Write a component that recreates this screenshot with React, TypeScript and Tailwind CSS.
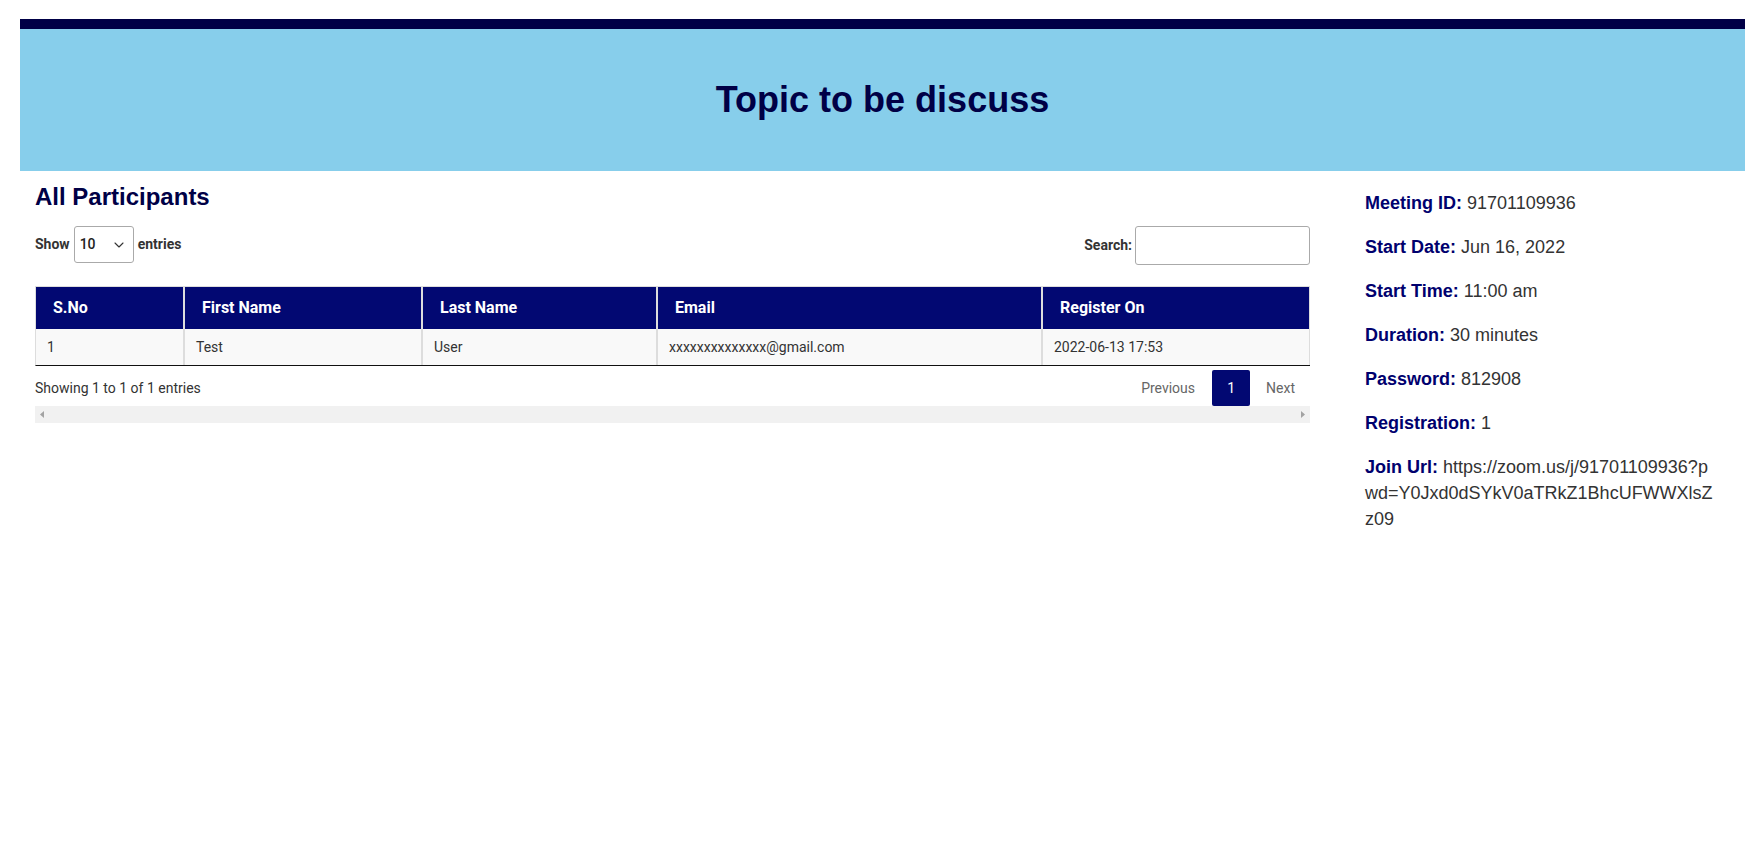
import { ChevronDown } from 'lucide-react';

const columns = [
  { label: 'S.No', w: 'w-[149px]' },
  { label: 'First Name', w: 'w-[238px]' },
  { label: 'Last Name', w: 'w-[235px]' },
  { label: 'Email', w: 'w-[385px]' },
  { label: 'Register On', w: 'flex-1' },
];

const row = ['1', 'Test', 'User', 'xxxxxxxxxxxxxx@gmail.com', '2022-06-13 17:53'];

const details = [
  { label: 'Meeting ID:', value: '91701109936' },
  { label: 'Start Date:', value: 'Jun 16, 2022' },
  { label: 'Start Time:', value: '11:00 am' },
  { label: 'Duration:', value: '30 minutes' },
  { label: 'Password:', value: '812908' },
  { label: 'Registration:', value: '1' },
  { label: 'Join Url:', value: 'https://zoom.us/j/91701109936?pwd=Y0Jxd0dSYkV0aTRkZ1BhcUFWWXlsZz09' },
];

export default function App() {
  return (
    <div className="min-h-screen bg-white pl-[20px] pr-[11px] pt-[19px] pb-10 font-['Liberation_Sans',Arial,sans-serif]">
      {/* Banner */}
      <div className="border-t-[10px] border-[#000046] bg-[#87ceeb] h-[152px] flex items-center justify-center">
        <h1 className="text-[36px] font-bold text-[#000046] leading-[40px]">Topic to be discuss</h1>
      </div>

      <div className="flex">
        {/* Participants table */}
        <div className="ml-[15px] w-[1275px] font-['Roboto',sans-serif] text-[#333]">
          <h2 className="mt-[13px] text-[24px] leading-[26px] font-bold text-[#000046] font-['Liberation_Sans',Arial,sans-serif]">
            All Participants
          </h2>

          <div className="mt-[16px] flex items-start justify-between h-[39px]">
            <div className="flex items-center gap-[4px] text-[14px] font-bold h-[37px]">
              <span>Show</span>
              <div className="w-[60px] h-[37px] border border-[#aaa] rounded-[3px] flex items-center justify-between pl-[5px] pr-[6px] font-medium text-[#222]">
                <span>10</span>
                <ChevronDown size={16} strokeWidth={1.6} className="text-[#333]" />
              </div>
              <span>entries</span>
            </div>
            <div className="flex items-center gap-[3px] text-[14px] font-bold h-[39px]">
              <span>Search:</span>
              <input
                type="text"
                className="w-[175px] h-[39px] border border-[#aaa] rounded-[3px] outline-none px-2"
              />
            </div>
          </div>

          {/* Table */}
          <div className="mt-[21px] border-l border-t border-[#ddd] border-b border-b-[#111]">
            <div className="flex bg-[#020872] text-white text-[16px] font-bold h-[42px]">
              {columns.map((c, i) => (
                <div
                  key={c.label}
                  className={`${c.w} flex items-center pl-[17px] border-[#ddd] ${i < columns.length - 1 ? 'border-r-2' : 'border-r'}`}
                >
                  {c.label}
                </div>
              ))}
            </div>
            <div className="flex bg-[#f9f9f9] text-[14px] h-[36px]">
              {row.map((v, i) => (
                <div
                  key={i}
                  className={`${columns[i].w} flex items-center pl-[11px] border-[#ddd] ${i < columns.length - 1 ? 'border-r-2' : 'border-r'}`}
                >
                  {v}
                </div>
              ))}
            </div>
          </div>

          <div className="mt-[4px] flex items-center justify-between h-[36px] text-[14px]">
            <span>Showing 1 to 1 of 1 entries</span>
            <div className="flex items-center text-[#666] h-[36px]">
              <span className="pl-[12px] pr-[17px]">Previous</span>
              <span className="w-[38px] h-[36px] rounded-[2px] bg-[#020872] text-white flex items-center justify-center">1</span>
              <span className="pl-[16px] pr-[15px]">Next</span>
            </div>
          </div>

          {/* Scrollbar */}
          <div className="h-[17px] bg-[#f1f1f1] flex items-center justify-between px-[5px]">
            <svg width="4" height="7" viewBox="0 0 4 7">
              <path d="M4 0 L0 3.5 L4 7 Z" fill="#a3a3a3" />
            </svg>
            <svg width="4" height="7" viewBox="0 0 4 7">
              <path d="M0 0 L4 3.5 L0 7 Z" fill="#a3a3a3" />
            </svg>
          </div>
        </div>

        {/* Meeting details */}
        <div className="ml-[55px] w-[350px] pt-[19px] text-[18px] leading-[26px] text-[#333]">
          {details.map((d) => (
            <p key={d.label} className="mb-[18px] break-all">
              <span className="font-bold text-[#00006e]">{d.label}</span> {d.value}
            </p>
          ))}
        </div>
      </div>
    </div>
  );
}
